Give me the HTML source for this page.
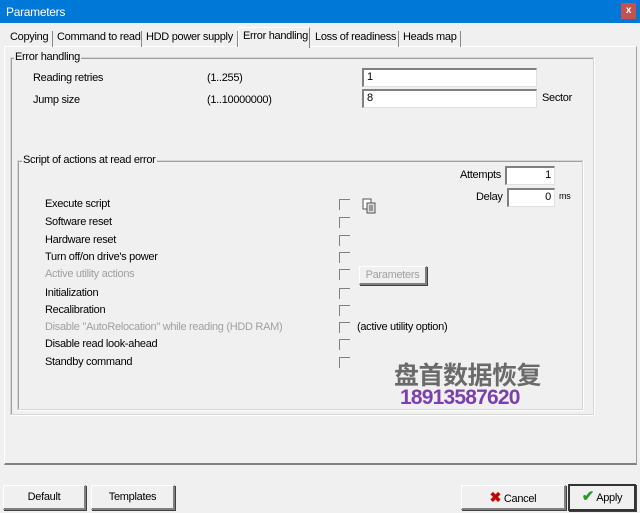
<!DOCTYPE html>
<html><head><meta charset="utf-8"><style>
*{margin:0;padding:0;box-sizing:border-box}
body{width:640px;height:513px;background:#f0f0f0;position:relative;overflow:hidden;font-family:"Liberation Sans","Noto Sans CJK SC",sans-serif;font-size:11px;color:#000;letter-spacing:-0.3px}
.a{position:absolute;white-space:nowrap}
.title{left:0;top:0;width:640px;height:23px;background:#0078d7;color:#fff;font-size:12px;padding:5px 0 0 6px}
.close{position:absolute;right:4px;top:3px;width:15px;height:16px;background:#c75050;color:#fff;font-size:10px;text-align:center;line-height:15px;font-weight:bold}
.tab{top:30px;height:16px;border-right:1px solid #888;padding:0 4px}
.grp{border:1px solid #d5d5d5;box-shadow:inset 1px 1px 0 #a0a0a0,1px 1px 0 #fff}
.lab{background:#f0f0f0;padding:0 1px}
.edit{background:#fff;border-top:2px solid #808080;border-left:2px solid #808080;border-right:1px solid #e0e0e0;border-bottom:1px solid #e0e0e0;padding:1px 3px;height:19px}
.cb{width:11px;height:11px;border-top:1px solid #808080;border-left:1px solid #808080;background:#f0f0f0}
.btn{height:25px;border:1px solid #fff;border-right:2px solid #808080;border-bottom:2px solid #808080;box-shadow:1px 1px 0 #404040;text-align:center;line-height:22px;font-size:11px}
.dis{color:#a0a0a0}
</style></head><body>
<div class="a title">Parameters<div class="close">x</div></div>
<div class="a" style="left:4px;top:46px;width:633px;height:419px;border:1px solid #fff;border-right:1px solid #a0a0a0;border-bottom:2px solid #808080"></div>
<div class="a tab" style="left:6px;top:31px;width:47px">Copying</div>
<div class="a tab" style="left:53px;top:31px;width:89px;padding-left:4px">Command to read</div>
<div class="a tab" style="left:142px;top:31px;width:96px">HDD power supply</div>
<div class="a" style="left:238px;top:27px;width:72px;height:21px;background:#f0f0f0;border:1px solid #fff;border-right:1px solid #808080;border-bottom:none;padding:2px 4px">Error handling</div>
<div class="a tab" style="left:311px;top:31px;width:88px">Loss of readiness</div>
<div class="a tab" style="left:399px;top:31px;width:62px">Heads map</div>

<div class="a grp" style="left:10px;top:57px;width:584px;height:358px"></div>
<div class="a lab" style="left:14px;top:51px">Error handling</div>
<div class="a" style="left:33px;top:72px">Reading retries</div>
<div class="a" style="left:207px;top:72px">(1..255)</div>
<div class="a edit" style="left:362px;top:68px;width:175px">1</div>
<div class="a" style="left:33px;top:94px">Jump size</div>
<div class="a" style="left:207px;top:94px">(1..10000000)</div>
<div class="a edit" style="left:362px;top:89px;width:175px">8</div>
<div class="a" style="left:542px;top:92px">Sector</div>

<div class="a grp" style="left:17px;top:160px;width:566px;height:250px"></div>
<div class="a lab" style="left:22px;top:154px">Script of actions at read error</div>
<div class="a" style="left:460px;top:169px">Attempts</div>
<div class="a edit" style="left:505px;top:166px;width:50px;text-align:right">1</div>
<div class="a" style="left:476px;top:191px">Delay</div>
<div class="a edit" style="left:507px;top:188px;width:48px;text-align:right">0</div>
<div class="a" style="left:559px;top:191px;font-size:9px">ms</div>

<div class="a" style="left:45px;top:198px">Execute script</div>
<div class="a" style="left:45px;top:216px">Software reset</div>
<div class="a" style="left:45px;top:234px">Hardware reset</div>
<div class="a" style="left:45px;top:251px">Turn off/on drive's power</div>
<div class="a dis" style="left:45px;top:268px">Active utility actions</div>
<div class="a" style="left:45px;top:287px">Initialization</div>
<div class="a" style="left:45px;top:304px">Recalibration</div>
<div class="a dis" style="left:45px;top:321px">Disable "AutoRelocation" while reading (HDD RAM)</div>
<div class="a" style="left:45px;top:338px">Disable read look-ahead</div>
<div class="a" style="left:45px;top:356px">Standby command</div>
<div class="a cb" style="left:339px;top:199px"></div>
<div class="a cb" style="left:339px;top:217px"></div>
<div class="a cb" style="left:339px;top:235px"></div>
<div class="a cb" style="left:339px;top:252px"></div>
<div class="a cb" style="left:339px;top:269px"></div>
<div class="a cb" style="left:339px;top:288px"></div>
<div class="a cb" style="left:339px;top:305px"></div>
<div class="a cb" style="left:339px;top:322px"></div>
<div class="a cb" style="left:339px;top:339px"></div>
<div class="a cb" style="left:339px;top:357px"></div>
<svg class="a" style="left:361px;top:198px" width="16" height="16" viewBox="0 0 16 16"><rect x="2" y="1" width="8" height="10" fill="#fff" stroke="#555"/><rect x="6" y="5" width="8" height="10" fill="#ddd" stroke="#555"/><path d="M8 8h4M8 10h4M8 12h4" stroke="#555"/></svg>
<div class="a btn dis" style="left:359px;top:266px;width:68px;height:19px;line-height:16px">Parameters</div>
<div class="a" style="left:357px;top:321px">(active utility option)</div>

<div class="a" style="left:394px;top:356px;font-size:25px;font-weight:bold;color:#6a6a6a;letter-spacing:-0.5px">盘首数据恢复</div>
<div class="a" style="left:400px;top:386px;font-size:21px;font-weight:bold;color:#7a3fb0;letter-spacing:-0.8px">18913587620</div>

<div class="a btn" style="left:3px;top:485px;width:83px">Default</div>
<div class="a btn" style="left:91px;top:485px;width:84px">Templates</div>
<div class="a btn" style="left:461px;top:485px;width:105px"><span style="color:#c00;font-weight:bold;font-size:14px">✖</span> Cancel</div>
<div class="a btn" style="left:568px;top:484px;width:68px;height:27px;border:2px solid #333"><span style="color:#2a9a2a;font-weight:bold;font-size:15px">✔</span> Apply</div>
</body></html>
